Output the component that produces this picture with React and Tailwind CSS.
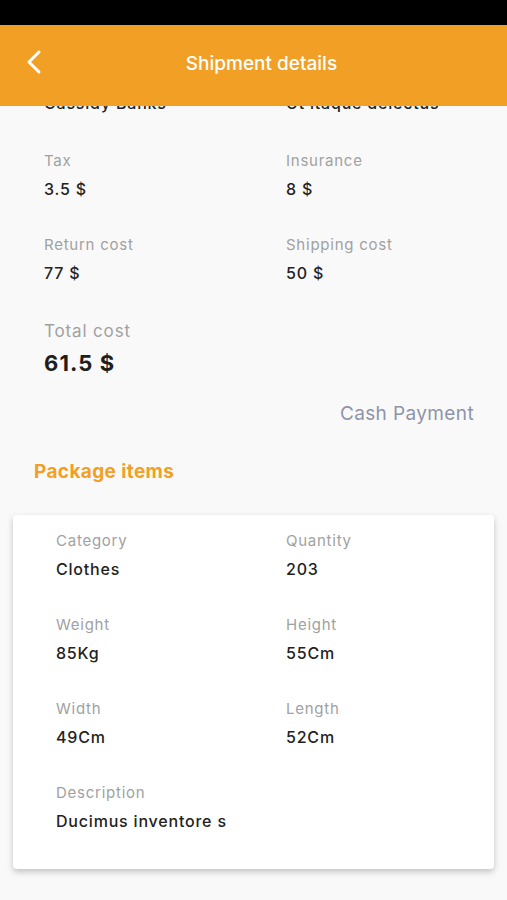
const summary = [
  [
    { label: "Tax", value: "3.5 $" },
    { label: "Insurance", value: "8 $" },
  ],
  [
    { label: "Return cost", value: "77 $" },
    { label: "Shipping cost", value: "50 $" },
  ],
];

const items = [
  [
    { label: "Category", value: "Clothes" },
    { label: "Quantity", value: "203" },
  ],
  [
    { label: "Weight", value: "85Kg" },
    { label: "Height", value: "55Cm" },
  ],
  [
    { label: "Width", value: "49Cm" },
    { label: "Length", value: "52Cm" },
  ],
];

const Field = ({ label, value }) => (
  <div className="flex flex-col gap-[7px]">
    <span className="text-[15px] leading-[20px] tracking-[0.05em] text-[#a1a1a1]">{label}</span>
    <span className="text-[16px] leading-[22px] tracking-[0.05em] font-medium text-[#222]">{value}</span>
  </div>
);

const App = () => {
  return (
    <div
      className="w-[507px] h-[900px] overflow-hidden bg-[#f9f9f9] flex flex-col"
      style={{ fontFamily: "Inter, 'Noto Sans', sans-serif" }}
    >
      {/* Status bar */}
      <div className="h-[25px] bg-black shrink-0" />

      {/* Header */}
      <div className="relative z-10 h-[81px] shrink-0 bg-[#f1a025] flex items-center justify-center pl-[16px]">
        <button className="absolute left-[24px] top-[24px] w-[20px] h-[26px] flex items-center justify-center">
          <svg width="18" height="26" viewBox="0 0 18 26" fill="none">
            <polyline
              points="14,3 4,13 14,23"
              stroke="white"
              strokeWidth="3"
              strokeLinecap="round"
              strokeLinejoin="round"
            />
          </svg>
        </button>
        <h1 className="text-white text-[19px] font-medium -mt-[2px]">Shipment details</h1>
      </div>

      {/* Scrolled content */}
      <div className="-mt-[14px] flex flex-col">
        <div className="grid grid-cols-[242px_1fr] pl-[44px]">
          <span className="text-[16px] leading-[22px] tracking-[0.05em] font-medium text-[#222]">Cassidy Banks</span>
          <span className="text-[16px] leading-[22px] tracking-[0.05em] font-medium text-[#222]">Ut itaque delectus</span>
        </div>

        <div className="flex flex-col gap-[35px] pl-[44px] mt-[37px]">
          {summary.map((row, i) => (
            <div key={i} className="grid grid-cols-[242px_1fr]">
              {row.map((f) => (
                <Field key={f.label} {...f} />
              ))}
            </div>
          ))}
          <div className="flex flex-col gap-[6px]">
            <span className="text-[17px] leading-[24px] tracking-[0.05em] text-[#a1a1a1]">Total cost</span>
            <span className="text-[22px] leading-[28px] tracking-[0.05em] font-bold text-[#1e1e1e]">61.5 $</span>
          </div>
        </div>

        <div className="mt-[24px] pr-[33px] text-right text-[19px] leading-[26px] tracking-[0.02em] text-[#8e94aa]">
          Cash Payment
        </div>

        <h2 className="mt-[32px] pl-[34px] text-[19px] leading-[26px] tracking-[0.02em] font-bold text-[#f1a025]">
          Package items
        </h2>

        <div className="mt-[30px] mx-[13px] bg-white rounded-[4px] shadow-[0_3px_6px_rgba(0,0,0,0.22)] pl-[43px] pt-[16px] pb-[37px] flex flex-col gap-[35px]">
          {items.map((row, i) => (
            <div key={i} className="grid grid-cols-[230px_1fr]">
              {row.map((f) => (
                <Field key={f.label} {...f} />
              ))}
            </div>
          ))}
          <Field label="Description" value="Ducimus inventore s" />
        </div>
      </div>
    </div>
  );
};

export default App;
